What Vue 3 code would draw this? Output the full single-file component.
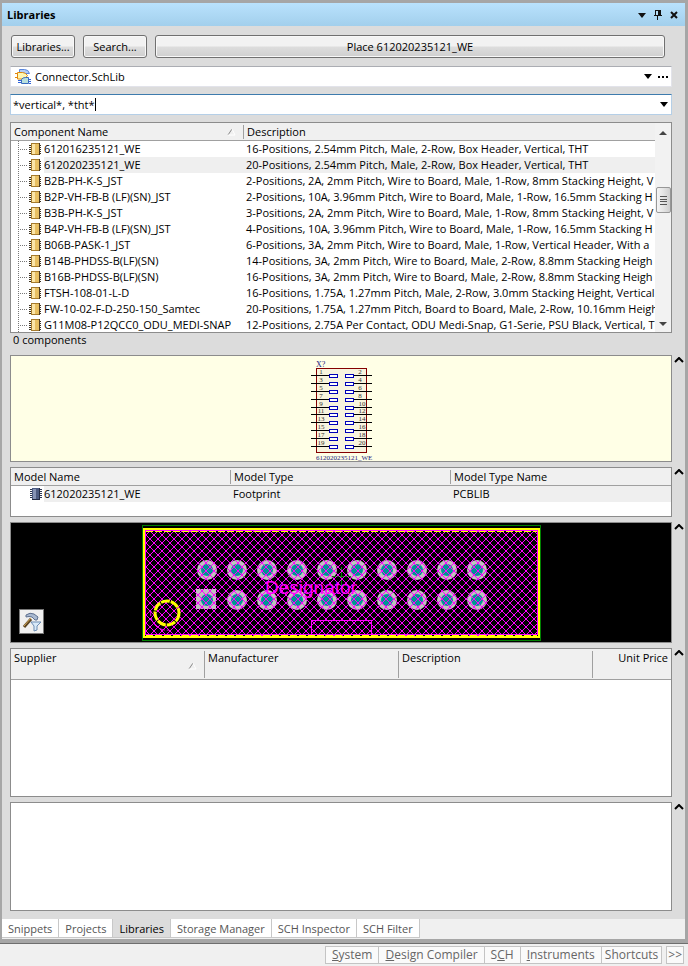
<script setup>
import { ref } from 'vue'

const query = ref('*vertical*, *tht*')
const library = ref('Connector.SchLib')
const selected = ref(1)

const components = [
  ['612016235121_WE', '16-Positions, 2.54mm Pitch, Male, 2-Row, Box Header, Vertical, THT'],
  ['612020235121_WE', '20-Positions, 2.54mm Pitch, Male, 2-Row, Box Header, Vertical, THT'],
  ['B2B-PH-K-S_JST', '2-Positions, 2A, 2mm Pitch, Wire to Board, Male, 1-Row, 8mm Stacking Height, V'],
  ['B2P-VH-FB-B (LF)(SN)_JST', '2-Positions, 10A, 3.96mm Pitch, Wire to Board, Male, 1-Row, 16.5mm Stacking H'],
  ['B3B-PH-K-S_JST', '3-Positions, 2A, 2mm Pitch, Wire to Board, Male, 1-Row, 8mm Stacking Height, V'],
  ['B4P-VH-FB-B (LF)(SN)_JST', '4-Positions, 10A, 3.96mm Pitch, Wire to Board, Male, 1-Row, 16.5mm Stacking H'],
  ['B06B-PASK-1_JST', '6-Positions, 3A, 2mm Pitch, Wire to Board, Male, 1-Row, Vertical Header, With a'],
  ['B14B-PHDSS-B(LF)(SN)', '14-Positions, 3A, 2mm Pitch, Wire to Board, Male, 2-Row, 8.8mm Stacking Heigh'],
  ['B16B-PHDSS-B(LF)(SN)', '16-Positions, 3A, 2mm Pitch, Wire to Board, Male, 2-Row, 8.8mm Stacking Heigh'],
  ['FTSH-108-01-L-D', '16-Positions, 1.75A, 1.27mm Pitch, Male, 2-Row, 3.0mm Stacking Height, Vertical'],
  ['FW-10-02-F-D-250-150_Samtec', '20-Positions, 1.75A, 1.27mm Pitch, Board to Board, Male, 2-Row, 10.16mm Heigh'],
  ['G11M08-P12QCC0_ODU_MEDI-SNAP', '12-Positions, 2.75A Per Contact, ODU Medi-Snap, G1-Serie, PSU Black, Vertical, T'],
]

const tabs = ['Snippets', 'Projects', 'Libraries', 'Storage Manager', 'SCH Inspector', 'SCH Filter']
const activeTab = ref('Libraries')

const menus = [
  ['', 'S', 'ystem'],
  ['', 'D', 'esign Compiler'],
  ['S', 'C', 'H'],
  ['', 'I', 'nstruments'],
  ['Shortcuts', '', ''],
]

const pinRows = Array.from({ length: 10 }, (_, i) => i)
const padColumns = Array.from({ length: 10 }, (_, i) => 65 + i * 30)
</script>

<template>
  <div class="app">
    <section class="panel">
      <header class="titlebar">
        <h1>Libraries</h1>
        <button class="title-btn" aria-label="Menu">
          <svg width="8" height="10"><path d="M0 3h8L4 8z" fill="#111" /></svg>
        </button>
        <button class="title-btn" aria-label="Pin">
          <svg width="8" height="10" shape-rendering="crispEdges"><path d="M1 0h6v5h1v1H0V5h1zM3 6h1v4H3z" fill="#111" /><path d="M2 1h2v4H2z" fill="#b5dcf6" /></svg>
        </button>
        <button class="title-btn" aria-label="Close">
          <svg width="8" height="10"><path d="M1 2l6 6M7 2l-6 6" stroke="#111" stroke-width="2" /></svg>
        </button>
      </header>

      <div class="body">
        <div class="actions">
          <button class="btn">Libraries...</button>
          <button class="btn">Search...</button>
          <button class="btn place">Place 612020235121_WE</button>
        </div>

        <div class="field">
          <svg class="lib-icon" width="17" height="16">
            <path d="M4.500 3.500v-3h5q4 0 5 4h-4z" fill="#b4ccf4" stroke="#5a86dc" />
            <path d="M2.500 3.500h5q3 0 5 3q-2 3.500-5 3.500h-5z" fill="#fff6b0" stroke="#e0870c" />
            <path d="M0 4.500h2M0 8.500h2" stroke="#e0870c" />
            <path d="M6.500 14.500v-4q1-2 4-2h3v6z" fill="#b9e0dc" stroke="#3a6cc0" />
            <path d="M3 11.500h3M3 13.500h3M14 10.500h2M14 12.500h2M14 14.500h2" stroke="#2f62d8" />
          </svg>
          <select v-model="library" aria-label="Library">
            <option>Connector.SchLib</option>
          </select>
          <svg class="arrow" width="8" height="5"><path d="M0 0h8L4 5z" fill="#000" /></svg>
          <button class="dots" aria-label="More">
            <svg width="11" height="2"><path d="M0 0h2v2H0zM4 0h2v2H4zM8 0h2v2H8z" fill="#000" /></svg>
          </button>
        </div>

        <div class="field search">
          <input v-model="query" type="text" aria-label="Filter" />
          <span class="caret"></span>
          <svg class="arrow end" width="8" height="5"><path d="M0 0h8L4 5z" fill="#000" /></svg>
        </div>

        <div class="box list">
          <div class="list-main">
            <table>
              <colgroup><col class="c-name" /><col /></colgroup>
              <thead>
                <tr>
                  <th>
                    <div class="th">
                      <span>Component Name</span>
                      <svg class="sort" width="9" height="8"><path d="M1 7L5 1" stroke="#888" /><path d="M5 1l3 6H1" stroke="#fff" fill="none" /></svg>
                    </div>
                  </th>
                  <th><div class="th">Description</div></th>
                </tr>
              </thead>
              <tbody>
                <tr v-for="(c, i) in components" :key="c[0]" :class="{ selected: i === selected }" @click="selected = i">
                  <td class="tree-cell">
                    <svg class="tree" width="33" height="16" shape-rendering="crispEdges">
                      <path d="M7.500 0v16" stroke="#777" stroke-dasharray="1 1" />
                      <path d="M9 8.500h8" stroke="#777" stroke-dasharray="1 1" />
                      <path d="M18 4.500h12M18 6.500h12M18 8.500h12M18 10.500h12M18 12.500h12" stroke="#3c3223" />
                      <path d="M20 2h8v12h-8z" fill="#e8bf62" />
                      <path d="M21 3h3v10h-3z" fill="#fbe5a8" />
                      <path d="M20 2.500h8M20.500 2v12M20 13.500h8" stroke="#a57a2c" />
                      <path d="M28.500 2v12" stroke="#4a3820" />
                    </svg>
                    <span class="name">{{ c[0] }}</span>
                  </td>
                  <td>{{ c[1] }}</td>
                </tr>
              </tbody>
            </table>
          </div>
          <div class="scrollbar">
            <svg class="sb-arrow" width="8" height="4"><path d="M0 4L4 0l4 4z" fill="#444" /></svg>
            <div class="thumb"><svg width="7" height="9" shape-rendering="crispEdges"><path d="M0 .5h7M0 3.500h7M0 5.500h7M0 8.500h7" stroke="#555" /></svg></div>
            <svg class="sb-arrow down" width="8" height="4"><path d="M0 0h8L4 4z" fill="#444" /></svg>
          </div>
        </div>
        <p class="count">0 components</p>

        <div class="section">
          <div class="box schematic">
            <svg class="symbol" width="61" height="105">
              <text x="5" y="11" class="ref">X?</text>
              <rect x="5.500" y="12.500" width="50" height="84" fill="#f8f4de" stroke="#840000" />
              <g v-for="i in pinRows" :key="i">
                <path :d="`M0 ${19.5 + i * 8 - Math.round(i / 9)}h18M43 ${19.5 + i * 8 - Math.round(i / 9)}h18`" stroke="#000" shape-rendering="crispEdges" />
                <rect x="18.500" :y="18.500 + i * 8 - Math.round(i / 9)" width="8" height="3" fill="#fff" stroke="#0000b8" />
                <rect x="34.500" :y="18.500 + i * 8 - Math.round(i / 9)" width="8" height="3" fill="#fff" stroke="#0000b8" />
                <text x="10" :y="18 + i * 8 - Math.round(i / 9)" class="pin" text-anchor="middle">{{ i * 2 + 1 }}</text>
                <text :x="i < 4 ? 49 : 51" :y="18 + i * 8 - Math.round(i / 9)" class="pin" text-anchor="middle">{{ i * 2 + 2 }}</text>
              </g>
              <text x="5" y="104" class="pin label">612020235121_WE</text>
            </svg>
          </div>
          <button class="fold" aria-label="Collapse symbol"><svg width="10" height="6"><path d="M1 5l4-4 4 4" fill="none" stroke="#000" stroke-width="2" /></svg></button>
        </div>

        <div class="section">
          <div class="box models">
            <table>
              <thead>
                <tr>
                  <th><div class="th">Model Name</div></th>
                  <th><div class="th">Model Type</div></th>
                  <th><div class="th">Model Type Name</div></th>
                </tr>
              </thead>
              <tbody>
                <tr class="selected">
                  <td class="tree-cell">
                    <svg class="tree" width="33" height="16" shape-rendering="crispEdges">
                      <path d="M19 3.500h12M19 5.500h12M19 7.500h12M19 9.500h12M19 11.500h12" stroke="#2c3550" />
                      <path d="M21 2h8v12h-8z" fill="#4c5a80" />
                      <path d="M22 3h3v10h-3z" fill="#8592b4" />
                      <path d="M21 13.500h8M28.500 2v12" stroke="#232b44" />
                    </svg>
                    <span class="name">612020235121_WE</span>
                  </td>
                  <td>Footprint</td>
                  <td>PCBLIB</td>
                </tr>
              </tbody>
            </table>
          </div>
          <button class="fold" aria-label="Collapse models"><svg width="10" height="6"><path d="M1 5l4-4 4 4" fill="none" stroke="#000" stroke-width="2" /></svg></button>
        </div>

        <div class="section">
          <div class="box pcb">
            <svg class="board" width="399" height="119">
              <defs>
                <pattern id="hatch" width="8" height="8" patternUnits="userSpaceOnUse" x="0" y="0">
                  <path d="M-1 -1L9 9M9 -1L-1 9" stroke="#f0f" stroke-width="1" shape-rendering="crispEdges" />
                </pattern>
              </defs>
              <g v-for="x in padColumns" :key="x">
                <circle :cx="x" cy="47" r="10" fill="#c0c0c0" />
                <circle v-if="x > 65" :cx="x" cy="77" r="10" fill="#c0c0c0" />
                <rect v-else x="54" y="66" width="20" height="20" fill="#c0c0c0" />
                <circle :cx="x" cy="47" r="6" fill="#009494" />
                <circle :cx="x" cy="77" r="6" fill="#009494" />
              </g>
              <path d="M199.500 44v19M190 53.500h19" stroke="#008000" />
              <rect x="3" y="7" width="392" height="106" fill="url(#hatch)" />
              <g fill="none" shape-rendering="crispEdges">
                <rect x=".5" y="2.500" width="398" height="115" stroke="#008000" />
                <path d="M1 6h397M2 5v110M397 5v110M1 114h397" stroke="#ff0" stroke-width="2" />
                <path d="M4 8.500h391M4 112.500h391" stroke="#ff0" stroke-dasharray="7 2" />
                <path d="M4 7.500h391M4 111.500h391M3.500 7v105M395.500 7v105" stroke="#f0f" />
                <path d="M169.500 112V97.500h60V112" stroke="#f0f" />
              </g>
              <path d="M9 88a16 16 0 0 0 18 19" fill="none" stroke="#f0f" stroke-dasharray="5 2" />
              <circle cx="25" cy="90" r="12" fill="none" stroke="#ff0" stroke-width="3" stroke-dasharray="9 1" />
              <text x="123" y="71" class="designator">Designator</text>
            </svg>
            <button class="tool" aria-label="Filter layers">
              <svg width="20" height="20">
                <path d="M2 15L9 7" stroke="#5c4422" stroke-width="3" />
                <path d="M2 14L9 6" stroke="#d2a85a" stroke-width="1" />
                <path d="M4 3q4-3 8-1l4 3-1 3h-2l-3-3q-3-1-6 0z" fill="#a9b9d0" stroke="#5f7190" />
                <path d="M9 10h10l-4 4v4l-3 1v-5z" fill="#d8e9f8" stroke="#6c8db3" />
              </svg>
            </button>
          </div>
          <button class="fold" aria-label="Collapse footprint"><svg width="10" height="6"><path d="M1 5l4-4 4 4" fill="none" stroke="#000" stroke-width="2" /></svg></button>
        </div>

        <div class="section">
          <div class="box suppliers">
            <table>
              <colgroup><col class="s-a" /><col class="s-a" /><col class="s-a" /><col /></colgroup>
              <thead>
                <tr>
                  <th>
                    <div class="th">
                      <span>Supplier</span>
                      <svg class="sort" width="9" height="8"><path d="M1 7L5 1" stroke="#888" /><path d="M5 1l3 6H1" stroke="#fff" fill="none" /></svg>
                    </div>
                  </th>
                  <th><div class="th">Manufacturer</div></th>
                  <th><div class="th">Description</div></th>
                  <th><div class="th right">Unit Price</div></th>
                </tr>
              </thead>
            </table>
          </div>
          <button class="fold" aria-label="Collapse suppliers"><svg width="10" height="6"><path d="M1 5l4-4 4 4" fill="none" stroke="#000" stroke-width="2" /></svg></button>
        </div>

        <div class="section last">
          <div class="box details"></div>
          <button class="fold" aria-label="Collapse details"><svg width="10" height="6"><path d="M1 5l4-4 4 4" fill="none" stroke="#000" stroke-width="2" /></svg></button>
        </div>
      </div>

      <nav class="tabs">
        <button v-for="t in tabs" :key="t" :class="{ active: t === activeTab }" @click="activeTab = t">{{ t }}</button>
      </nav>
    </section>

    <footer class="status">
      <button v-for="m in menus" :key="m.join('')">{{ m[0] }}<u>{{ m[1] }}</u>{{ m[2] }}</button>
      <button class="more">&gt;&gt;</button>
    </footer>
  </div>
</template>

<style>
body {
  background: #a6a6a6;
}
</style>

<style scoped>
.app {
  display: flex;
  flex-direction: column;
  min-height: 100vh;
  box-sizing: border-box;
  font: 11px/16px "Open Sans", "Noto Sans", sans-serif;
  color: #000;
}
button, input, select {
  font: inherit;
  color: inherit;
  margin: 0;
  padding: 0;
  border: 0;
  background: none;
  border-radius: 0;
}
svg {
  display: block;
  flex: none;
}
.panel {
  flex: 1;
  display: flex;
  flex-direction: column;
  padding: 3px 3px 4px 2px;
  background: #a6a6a6;
}
.titlebar {
  display: flex;
  align-items: center;
  gap: 8px;
  height: 23px;
  padding: 0 7px 0 5px;
  background: linear-gradient(#b9e2fd, #a2cfec);
}
h1 {
  flex: 1;
  margin: 0;
  font-size: 11px;
  line-height: 16px;
  font-weight: 700;
}
.body {
  flex: 1;
  display: flex;
  flex-direction: column;
  padding: 9px 13px 8px 8px;
  background: #dcdcdc;
}
.actions {
  display: flex;
  gap: 8px;
  margin: 0 7px 8px 1px;
}
.btn {
  width: 64px;
  height: 23px;
  border: 1px solid #707070;
  border-radius: 3px;
  box-shadow: inset 0 0 0 1px #f8f8f8;
  background: linear-gradient(#f2f2f2 0 48%, #dddddd 52%, #cfcfcf);
}
.place {
  flex: 1;
}
.field {
  display: flex;
  align-items: center;
  height: 19px;
  margin-bottom: 7px;
  padding: 0 2px;
  border: 1px solid #e2e3ea;
  border-top-color: #abadb3;
  background: #fff;
}
.lib-icon {
  margin: 0 3px 0 2px;
}
select {
  flex: 1;
  appearance: none;
  outline: 0;
}
.arrow {
  margin-right: 6px;
}
.arrow.end {
  margin: 0 1px 0 auto;
}
.search {
  border-color: #b5cfe7;
  border-top-color: #3d7bad;
}
input {
  field-sizing: content;
  outline: 0;
}
.caret {
  width: 1px;
  height: 13px;
  background: #000;
}
.box {
  flex: 1;
  min-width: 0;
  box-sizing: border-box;
  border: 1px solid #8c8c8c;
  background: #fff;
  overflow: hidden;
}
.list {
  display: flex;
  flex: none;
  height: 211px;
}
.list-main {
  flex: 1;
  min-width: 0;
  overflow: hidden;
}
table {
  width: 100%;
  table-layout: fixed;
  border-collapse: separate;
  border-spacing: 0;
}
.c-name {
  width: 233px;
}
th {
  height: 17px;
  padding: 0;
  border-bottom: 1px solid #a0a0a0;
  background: #f0f0f0;
  font-weight: 400;
  text-align: left;
  vertical-align: top;
}
.th {
  display: flex;
  justify-content: space-between;
  height: 14px;
  margin: 2px 0 1px;
  padding: 0 3px;
  border-right: 1px solid #a0a0a0;
  line-height: 14px;
}
th:last-child .th {
  border-right: 0;
}
.sort {
  align-self: center;
  margin-right: 4px;
}
td {
  height: 16px;
  padding: 0 0 0 2px;
  overflow: hidden;
  white-space: nowrap;
}
.tree-cell {
  display: flex;
  padding: 0;
}
.name {
  flex: 1;
}
.selected td:not(.tree-cell), .selected .name {
  background: #efefef;
}
.scrollbar {
  display: flex;
  flex-direction: column;
  align-items: center;
  width: 16px;
  padding: 8px 0 6px;
  background: #f2f2f2;
  box-sizing: border-box;
}
.thumb {
  display: flex;
  align-items: center;
  justify-content: center;
  box-sizing: border-box;
  width: 15px;
  height: 26px;
  margin-top: 52px;
  border: 1px solid #979797;
  border-radius: 2px;
  background: linear-gradient(90deg, #f5f5f5, #e4e4e4 50%, #cfcfcf);
}
.down {
  margin-top: auto;
}
.count {
  margin: 0 0 8px 3px;
  line-height: 14px;
}
.section {
  display: flex;
  margin: 0 -13px 5px 0;
}
.fold {
  display: flex;
  align-items: flex-start;
  justify-content: center;
  width: 13px;
  padding-top: 2px;
}
.schematic {
  display: flex;
  justify-content: center;
  height: 107px;
  background: #ffffe6;
}
.symbol {
  overflow: visible;
}
.pin {
  font: 7px "Liberation Serif", serif;
  fill: #333;
}
.ref {
  font: 8px "Liberation Serif", serif;
  fill: #20207c;
}
.label {
  fill: #20207c;
}
.models {
  height: 50px;
}
.models th:first-child,
.models th:nth-child(2) {
  width: 220px;
}
.pcb {
  display: flex;
  justify-content: center;
  position: relative;
  height: 121px;
  background: #000;
}
.designator {
  font: 19px "Liberation Sans", sans-serif;
  fill: #f0f;
}
.tool {
  position: absolute;
  left: 8px;
  bottom: 8px;
  display: flex;
  align-items: center;
  justify-content: center;
  box-sizing: border-box;
  width: 25px;
  height: 25px;
  border: 1px solid #777;
  background: #f0f0f0;
}
.suppliers {
  height: 149px;
}
.s-a {
  width: 194px;
}
.suppliers .th {
  height: 27px;
}
.suppliers .th .sort {
  align-self: flex-end;
  margin-bottom: 8px;
}
.suppliers .right {
  justify-content: flex-end;
}
.last {
  flex: 1;
  margin-bottom: 0;
  min-height: 109px;
}
.tabs {
  display: flex;
  height: 20px;
  background: #f0f0f0;
  color: #555;
}
.tabs button {
  box-sizing: border-box;
  height: 19px;
  padding: 1px 6px 0;
  border-right: 1px solid #c8c8c8;
  border-bottom: 1px solid #c8c8c8;
  background: #fff;
}
.tabs .active {
  background: #dcdcdc;
  color: #000;
}
.status {
  display: flex;
  justify-content: flex-end;
  height: 18px;
  padding: 2px 4px 3px;
  border-top: 1px solid #6e6e6e;
  background: #f0f0f0;
  color: #666;
  font-size: 12px;
}
.status button {
  padding: 0 6px;
  border: 1px solid #c4c4c4;
  border-left-width: 0;
  background: #fafafa;
}
.status button:first-child {
  border-left-width: 1px;
}
.status button:nth-child(5) {
  padding: 0 3px;
}
.status .more {
  margin-left: 4px;
  padding: 0 1px;
  border-left-width: 1px;
}
</style>
